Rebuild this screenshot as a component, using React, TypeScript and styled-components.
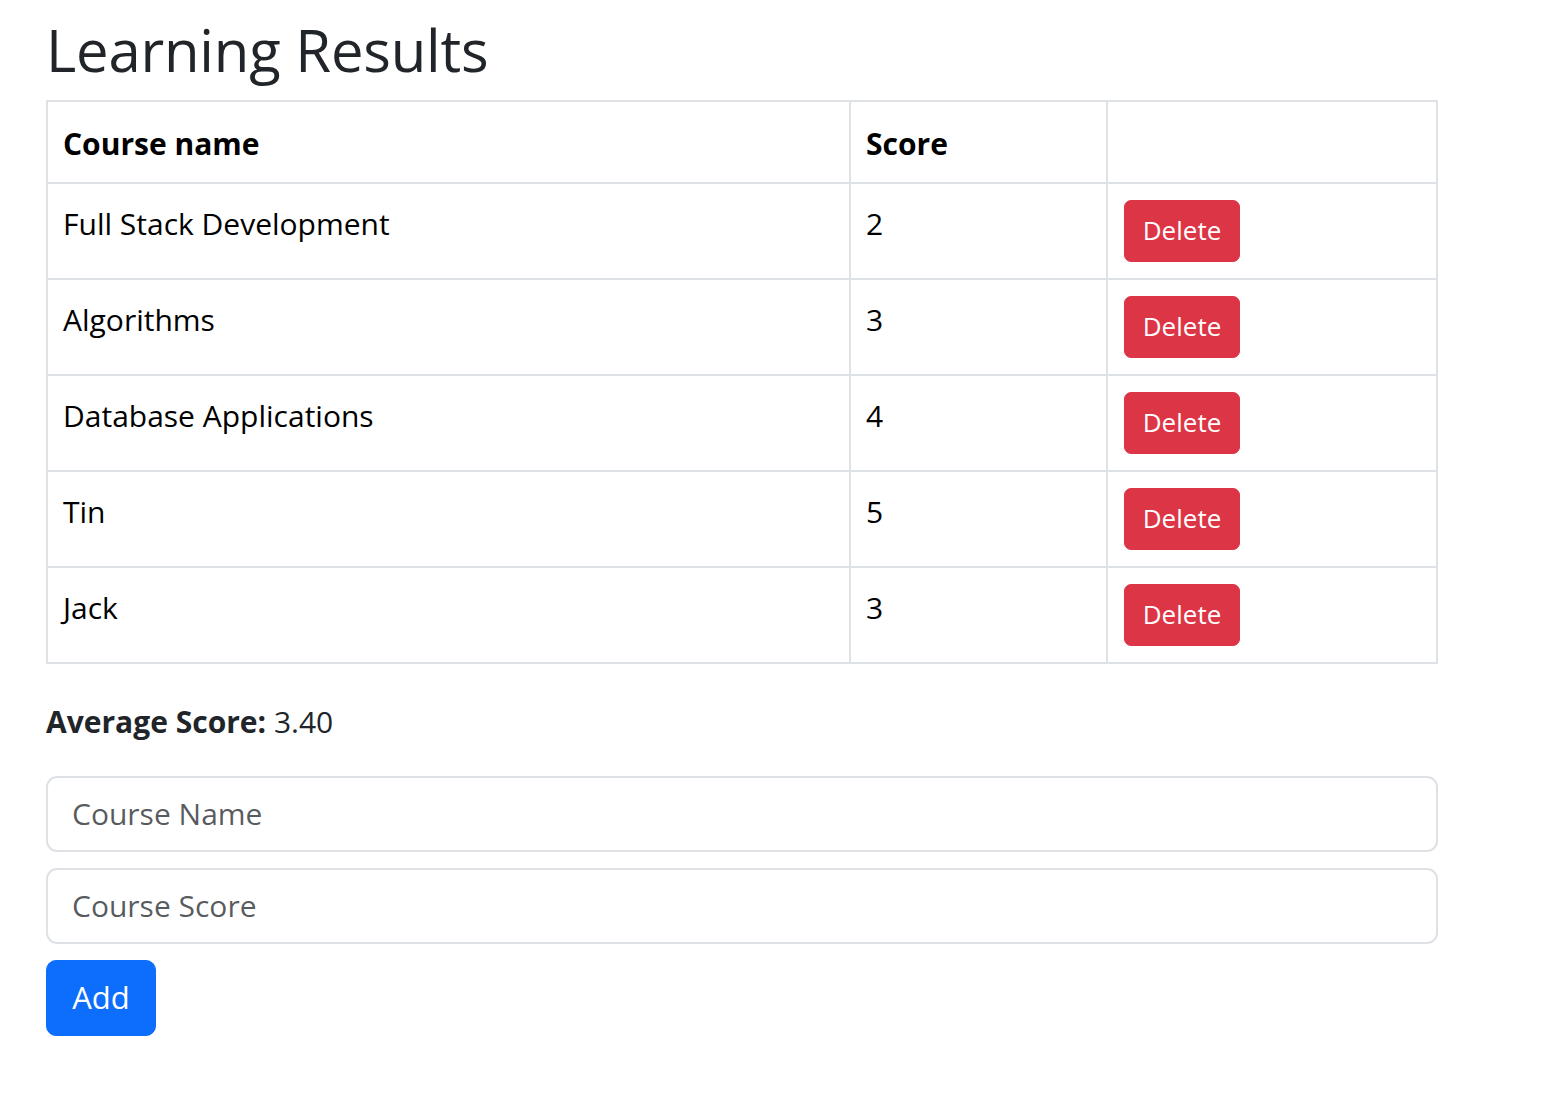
import React, { useState } from "react";
import styled, { createGlobalStyle } from "styled-components";

const GlobalStyle = createGlobalStyle`
  * { box-sizing: border-box; }
  body {
    margin: 0;
    background: #fff;
    color: #212529;
    font-family: "Open Sans", "Noto Sans", sans-serif;
    font-size: 30px;
    line-height: 1.5;
  }
`;

const Page = styled.div`
  width: 1392px;
  margin-left: 46px;
  padding-top: 15px;
  padding-bottom: 40px;
`;

const Title = styled.h1`
  margin: 0 0 15px 0;
  font-size: 58px;
  font-weight: 500;
  line-height: 1.2;
  letter-spacing: -0.2px;
  color: #212529;
`;

const Table = styled.table`
  width: 1392px;
  table-layout: fixed;
  border-collapse: separate;
  border-spacing: 0;
  border-top: 2px solid #dee2e6;
  border-left: 2px solid #dee2e6;
  margin-bottom: 35px;
  color: #000;
`;

const HeadCell = styled.th`
  text-align: left;
  font-weight: 700;
  padding: 19px 15px 16px 15px;
  border-right: 2px solid #dee2e6;
  border-bottom: 2px solid #dee2e6;
  vertical-align: bottom;
`;

const Cell = styled.td<{ $action?: boolean }>`
  padding: 16px 15px 16px ${(p) => (p.$action ? "16px" : "15px")};
  border-right: 2px solid #dee2e6;
  border-bottom: 2px solid #dee2e6;
  vertical-align: top;
`;

const CellText = styled.span`
  display: inline-block;
  padding-top: 1px;
`;

const DeleteButton = styled.button`
  display: block;
  width: 116px;
  height: 62px;
  padding: 0;
  border: 1px solid #dc3545;
  border-radius: 7px;
  background: #dc3545;
  color: #fff;
  font-family: inherit;
  font-size: 26px;
  line-height: 1.5;
  cursor: pointer;
`;

const Average = styled.p`
  margin: 0 0 32px 0;
  color: #212529;
`;

const Form = styled.div`
  display: flex;
  flex-direction: column;
  align-items: flex-start;
  gap: 16px;
`;

const Input = styled.input`
  width: 100%;
  height: 76px;
  padding: 0 24px;
  border: 2px solid #dee2e6;
  border-radius: 11px;
  background: #fff;
  color: #212529;
  font-family: inherit;
  font-size: 30px;
  outline: none;
  &::placeholder {
    color: rgba(33, 37, 41, 0.75);
    opacity: 1;
  }
`;

const AddButton = styled.button`
  height: 76px;
  width: 110px;
  padding: 0;
  border: 1px solid #0d6efd;
  border-radius: 10px;
  background: #0d6efd;
  color: #fff;
  font-family: inherit;
  font-size: 31px;
  line-height: 1.5;
  cursor: pointer;
`;

type Course = { name: string; score: number };

export default function App() {
  const [courses] = useState<Course[]>([
    { name: "Full Stack Development", score: 2 },
    { name: "Algorithms", score: 3 },
    { name: "Database Applications", score: 4 },
    { name: "Tin", score: 5 },
    { name: "Jack", score: 3 },
  ]);
  const avg = courses.reduce((s, c) => s + c.score, 0) / courses.length;

  return (
    <>
      <GlobalStyle />
      <Page>
        <Title>Learning Results</Title>
        <Table>
          <colgroup>
            <col style={{ width: 803 }} />
            <col style={{ width: 257 }} />
            <col style={{ width: 330 }} />
          </colgroup>
          <thead>
            <tr>
              <HeadCell>Course name</HeadCell>
              <HeadCell>Score</HeadCell>
              <HeadCell />
            </tr>
          </thead>
          <tbody>
            {courses.map((c, i) => (
              <tr key={i}>
                <Cell>
                  <CellText>{c.name}</CellText>
                </Cell>
                <Cell>
                  <CellText>{c.score}</CellText>
                </Cell>
                <Cell $action>
                  <DeleteButton>Delete</DeleteButton>
                </Cell>
              </tr>
            ))}
          </tbody>
        </Table>
        <Average>
          <b>Average Score:</b> {avg.toFixed(2)}
        </Average>
        <Form>
          <Input placeholder="Course Name" />
          <Input placeholder="Course Score" />
          <AddButton>Add</AddButton>
        </Form>
      </Page>
    </>
  );
}
